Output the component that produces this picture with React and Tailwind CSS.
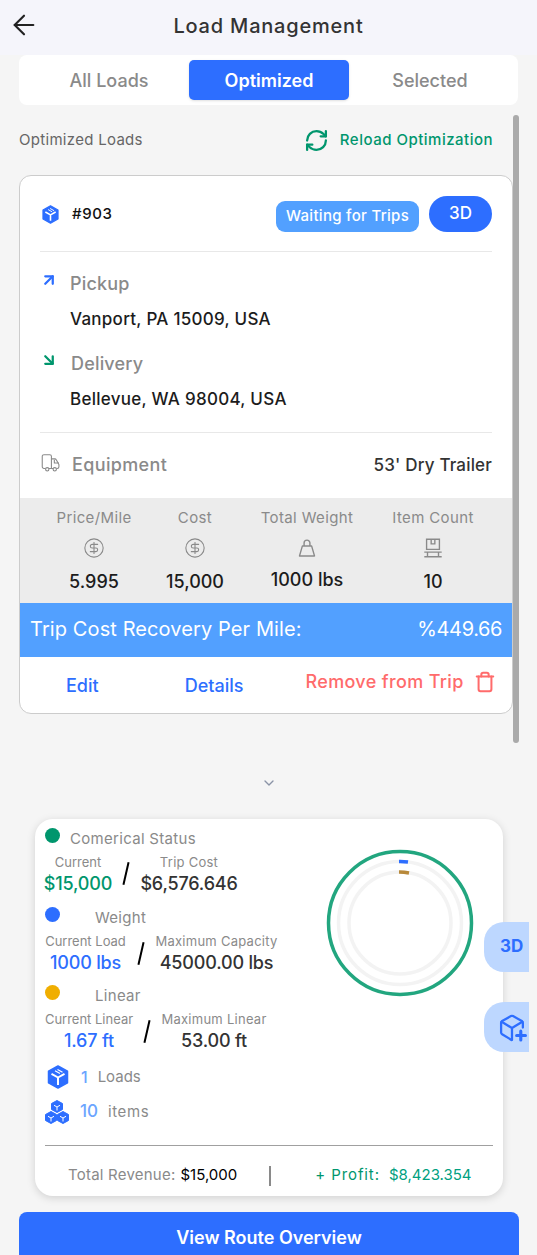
import { ArrowLeft, ArrowUpRight, ArrowDownRight, ChevronDown, CircleDollarSign, RefreshCw, Trash } from 'lucide-react';

const BLUE = '#2d6eff';

// filled hex box, used for the load number and the load count
function BoxIcon({ className }) {
  return (
    <svg viewBox="0 0 24 24" className={className}>
      <path d="M12 1 21.5 6.2V17.8L12 23 2.5 17.8V6.2Z" fill={BLUE} stroke={BLUE} strokeWidth="1.5" strokeLinejoin="round" />
      <path d="M12 12.5V20M12 12.5 5.5 8.8M12 12.5 18.5 8.8" stroke="#fff" strokeWidth="2" fill="none" />
      <path d="M9 5.8 14 8.6M11.5 4.4 16.5 7.2" stroke="#fff" strokeWidth="1.2" fill="none" />
    </svg>
  );
}

function CubesIcon({ className }) {
  const cube = (x, y) => (
    <g transform={`translate(${x} ${y})`}>
      <path d="M6 0 11.5 3V9L6 12 .5 9V3Z" fill={BLUE} stroke={BLUE} strokeWidth="1" strokeLinejoin="round" />
      <path d="M6 6.5V10M6 6.5 3 4.8M6 6.5 9 4.8" stroke="#fff" strokeWidth="1" fill="none" />
    </g>
  );
  return (
    <svg viewBox="0 0 24 24" className={className}>
      {cube(6, 0.5)}
      {cube(0, 11.5)}
      {cube(12, 11.5)}
    </svg>
  );
}

function TruckIcon({ className }) {
  return (
    <svg viewBox="0 0 24 24" fill="none" stroke="#8a8a8a" strokeWidth="1.3" strokeLinejoin="round" className={className}>
      <path d="M5.5 18.5H3.5a2 2 0 0 1-2-2V4a2 2 0 0 1 2-2h7a2 2 0 0 1 2 2v14.5H9.5" />
      <path d="M12.5 7h4.2c.7 0 1.3.4 1.6 1l2.9 5.3c.2.3.3.6.3 1v2.2a2 2 0 0 1-2 2h-1M14.5 18.5h-2" />
      <path d="M16 8v4h5.5" />
      <circle cx="7.5" cy="19.5" r="2" />
      <circle cx="16.5" cy="19.5" r="2" />
    </svg>
  );
}

function WeightIcon({ className }) {
  return (
    <svg viewBox="0 0 24 24" fill="none" stroke="#8a8a8a" strokeWidth="1.7" strokeLinejoin="round" className={className}>
      <path d="M6.5 9.5h11L21 21.5H3Z" />
      <path d="M8.5 9.5V6a3.5 3.5 0 0 1 7 0v3.5" />
    </svg>
  );
}

function PalletIcon({ className }) {
  return (
    <svg viewBox="0 0 24 24" fill="none" stroke="#8a8a8a" strokeWidth="1.5" className={className}>
      <path d="M5 2.5h14v11H5Z" />
      <path d="M10 2.5v5h4v-5" />
      <path d="M2.5 16.5h19M2.5 21.5h19M6 16.5v5M18 16.5v5" />
    </svg>
  );
}

function BoxPlusIcon({ className }) {
  return (
    <svg viewBox="0 0 28 28" fill="none" stroke={BLUE} strokeWidth="2.2" strokeLinejoin="round" strokeLinecap="round" className={className}>
      <path d="M24 14V9.5a2 2 0 0 0-1-1.7L14.5 3a2 2 0 0 0-2 0L4 7.8a2 2 0 0 0-1 1.7v9.300a2 2 0 0 0 1 1.700L13 26" />
      <path d="M3.5 8.500l10 6 10-6M13.500 14.500V26" />
      <path d="M22 17.500v8.500M18 21.700h8.500" strokeWidth="3" />
    </svg>
  );
}

function Ring() {
  // green outer ring plus two grey tracks with small progress ticks
  return (
    <svg viewBox="0 0 150 150" className="w-[150px] h-[150px]">
      <circle cx="75" cy="75" r="71.5" fill="none" stroke="#22a67f" strokeWidth="3.5" />
      <circle cx="75" cy="75" r="61.5" fill="none" stroke="#f3f3f3" strokeWidth="3.5" />
      <circle cx="75" cy="75" r="51" fill="none" stroke="#f3f3f3" strokeWidth="3.5" />
      <path d="M74 13.5A61.5 61.5 0 0 1 83 14" fill="none" stroke={BLUE} strokeWidth="3.5" />
      <path d="M74 24A51 51 0 0 1 84 25" fill="none" stroke="#b8893a" strokeWidth="3.5" />
    </svg>
  );
}

function Stat({ label, value, Icon, iconClass, valueClass = '' }) {
  return (
    <div className="flex flex-col items-center whitespace-nowrap">
      <span className="text-[15px] leading-[20px] text-[#8a8a8a] tracking-[0.025em]">{label}</span>
      <span className="mt-[9px] h-[22px] flex items-center">
        <Icon strokeWidth={1.2} className={`text-[#8a8a8a] ${iconClass}`} />
      </span>
      <span className={`mt-[12px] text-[18px] leading-[22px] font-medium text-[#1c1c1c] ${valueClass}`}>{value}</span>
    </div>
  );
}

function Metric({ dotClass, title, left, right, leftClass, rightClass, slashClass, valueClass, titleGap }) {
  return (
    <div>
      <div className="flex items-center h-[18px]">
        <span className={`w-[15px] h-[15px] rounded-full -mt-[7px] ${dotClass}`} />
        <span className={`text-[15px] leading-[18px] text-[#8a8a8a] tracking-[0.02em] ${titleGap}`}>{title}</span>
      </div>
      <div className="flex mt-[5px] whitespace-nowrap">
        <div className={`flex flex-col items-center ${leftClass}`}>
          <span className="text-[13px] leading-[18px] text-[#8a8a8a]">{left[0]}</span>
          <span className={`text-[18px] leading-[26px] font-medium tracking-[-0.01em] ${valueClass}`}>{left[1]}</span>
        </div>
        <span className={`w-[2px] h-[23px] bg-black rotate-[13deg] ${slashClass}`} />
        <div className={`flex flex-col items-center ${rightClass}`}>
          <span className="text-[13px] leading-[18px] text-[#8a8a8a] tracking-[0.02em]">{right[0]}</span>
          <span className="text-[18px] leading-[26px] font-medium text-[#333333] tracking-[-0.01em]">{right[1]}</span>
        </div>
      </div>
    </div>
  );
}

export default function App() {
  return (
    <div className="relative h-[1255px] w-[537px] overflow-hidden bg-[#f5f5f5] font-['Inter',sans-serif]">
      {/* header */}
      <header className="relative flex items-center justify-center h-[55px] bg-[#f5f5fb]">
        <ArrowLeft className="absolute left-[8px] top-[9px] w-[32px] h-[32px] text-[#222222]" strokeWidth={1.6} />
        <h1 className="text-[20px] font-medium text-[#333333] tracking-[0.04em] -mt-[4px]">Load Management</h1>
      </header>

      {/* tabs */}
      <div className="mx-[19px] h-[50px] bg-white rounded-[8px] grid grid-cols-[170px_160px_170px] py-[5px]">
        <button className="pl-[10px] text-[18px] font-medium text-[#8a8a8a]">All Loads</button>
        <button className="text-[18px] font-semibold text-white bg-[#2d6eff] rounded-[5px] shadow-sm">Optimized</button>
        <button className="pr-[8px] text-[18px] font-medium text-[#8a8a8a]">Selected</button>
      </div>

      {/* scrollable list */}
      <div className="relative">
        <div className="absolute left-[513px] top-[10px] w-[6px] h-[628px] rounded-full bg-[#aaaaaa]" />
        <div className="flex items-center justify-between pl-[19px] pr-[44px] h-[70px]">
          <span className="text-[15px] text-[#666666] tracking-[0.02em]">Optimized Loads</span>
          <span className="flex items-center gap-[11px] text-[15px] font-medium text-[#00966d] tracking-[0.033em]">
            <RefreshCw className="w-[25px] h-[25px]" strokeWidth={2.2} />
            Reload Optimization
          </span>
        </div>

        <div className="ml-[19px] w-[494px] h-[539px] bg-white border border-[#cccccc] rounded-[12px] overflow-hidden">
          <div className="mx-[20px] h-[76px] flex items-center justify-between border-b border-[#e8e8e8]">
            <div className="flex items-center gap-[12px] mt-[1px]">
              <BoxIcon className="w-[19px] h-[19px] ml-[1px]" />
              <span className="text-[15px] font-medium text-[#111111] tracking-[0.04em]">#903</span>
            </div>
            <div className="flex items-center gap-[10px]">
              <span className="flex items-center justify-center w-[143px] h-[31px] mt-[6px] rounded-[9px] bg-[#52a0ff] text-white text-[15px] font-medium tracking-[0.02em]">Waiting for Trips</span>
              <span className="flex items-center justify-center w-[63px] h-[36px] rounded-full bg-[#2d6eff] text-white text-[17px] font-medium">3D</span>
            </div>
          </div>

          <div className="mx-[20px] h-[181px] border-b border-[#e8e8e8] pt-[18px]">
            <div className="flex items-center h-[26px]">
              <ArrowUpRight className="w-[18px] h-[18px] -mt-[6px] text-[#2d6eff]" strokeWidth={3} />
              <span className="ml-[12px] text-[18px] font-medium text-[#8a8a8a] tracking-[0.01em]">Pickup</span>
            </div>
            <p className="ml-[30px] mt-[10px] text-[17px] leading-[26px] font-medium text-[#1c1c1c] tracking-[0.016em]">Vanport, PA 15009, USA</p>
            <div className="flex items-center h-[26px] mt-[18px]">
              <ArrowDownRight className="w-[18px] h-[18px] -mt-[6px] text-[#00966d]" strokeWidth={3} />
              <span className="ml-[13px] text-[18px] font-medium text-[#8a8a8a] tracking-[0.01em]">Delivery</span>
            </div>
            <p className="ml-[30px] mt-[10px] text-[17px] leading-[26px] font-medium text-[#1c1c1c] tracking-[0.016em]">Bellevue, WA 98004, USA</p>
          </div>

          <div className="mx-[20px] h-[65px] flex items-center justify-between">
            <div className="flex items-center gap-[11px] -mt-[2px]">
              <TruckIcon className="w-[20px] h-[20px] -mt-[3px] ml-[1px]" />
              <span className="text-[18px] font-medium text-[#8a8a8a] tracking-[0.02em]">Equipment</span>
            </div>
            <span className="text-[17px] font-medium text-[#333333] tracking-[0.01em]">53' Dry Trailer</span>
          </div>

          <div className="h-[105px] bg-[#ececec] grid grid-cols-[148px_54px_170px_120px] pt-[10px]">
            <Stat label="Price/Mile" value="5.995" Icon={CircleDollarSign} iconClass="w-[22px] h-[22px]" />
            <Stat label="Cost" value="15,000" Icon={CircleDollarSign} iconClass="w-[22px] h-[22px]" />
            <Stat label="Total Weight" value="1000 lbs" Icon={WeightIcon} iconClass="w-[20px] h-[20px]" valueClass="-translate-y-[2px]" />
            <div className="w-[82px]">
              <Stat label="Item Count" value="10" Icon={PalletIcon} iconClass="w-[22px] h-[22px]" />
            </div>
          </div>

          <div className="h-[54px] pb-[3px] bg-[#52a0ff] flex items-center justify-between px-[10px] text-white text-[20px]">
            <span className="tracking-[0.005em]">Trip Cost Recovery Per Mile:</span>
            <span className="tracking-[-0.02em]">%449.66</span>
          </div>

          <div className="flex items-center h-[55px] pt-[2px] text-[18px] font-medium text-[#2d6eff]">
            <span className="ml-[46px]">Edit</span>
            <span className="ml-[86px]">Details</span>
            <span className="ml-[62px] flex items-center gap-[10px] text-[#ff6b6b] -mt-[8px] tracking-[0.02em]">
              Remove from Trip
              <Trash className="w-[22px] h-[22px]" strokeWidth={2.2} />
            </span>
          </div>
        </div>
      </div>

      <div className="flex justify-center h-[105px] pt-[61px]">
        <ChevronDown className="w-[16px] h-[16px] text-[#8a93a6]" strokeWidth={2} />
      </div>

      {/* capacity summary */}
      <div className="relative">
        <div className="absolute left-[484px] top-[103px] w-[45px] h-[50px] rounded-l-[20px] bg-[#bdd7ff] flex items-center pl-[16px] text-[17px] font-bold text-[#2d6eff]">3D</div>
        <div className="absolute left-[484px] top-[183px] w-[45px] h-[50px] rounded-l-[20px] bg-[#bdd7ff] flex items-center pl-[14px]">
          <BoxPlusIcon className="w-[29px] h-[29px]" />
        </div>

        <div className="ml-[35px] w-[468px] h-[377px] bg-white rounded-[18px] shadow-[0_2px_8px_rgba(0,0,0,0.15)] px-[10px] pt-[11px]">
          <div className="flex">
            <div className="w-[280px] flex flex-col gap-[11.5px] h-[235px]">
              <Metric dotClass="bg-[#00966d]" title="Comerical Status" titleGap="ml-[10px]" valueClass="text-[#00966d]"
                left={['Current', '$15,000']} right={['Trip Cost', '$6,576.646']}
                leftClass="w-[66px]" slashClass="ml-[14px] mt-[9px]" rightClass="w-[96px] ml-[14px]" />
              <Metric dotClass="bg-[#2d6eff]" title="Weight" titleGap="ml-[35px]" valueClass="text-[#2d6eff]"
                left={['Current Load', '1000 lbs']} right={['Maximum Capacity', '45000.00 lbs']}
                leftClass="w-[81px]" slashClass="ml-[14px] mt-[10px]" rightClass="w-[123px] ml-[13px]" />
              <Metric dotClass="bg-[#f0ae00]" title="Linear" titleGap="ml-[35px]" valueClass="text-[#2d6eff]"
                left={['Current Linear', '1.67 ft']} right={['Maximum Linear', '53.00 ft']}
                leftClass="w-[88px]" slashClass="ml-[13px] mt-[10px]" rightClass="w-[102px] ml-[15px]" />
            </div>
            <div className="mt-[18px]">
              <Ring />
            </div>
          </div>

          <div className="flex items-center h-[26px] mt-[-1px]">
            <BoxIcon className="w-[24px] h-[24px] ml-[1px]" />
            <span className="ml-[11px] text-[16px] font-medium text-[#6ba5ff]">1</span>
            <span className="ml-[10px] text-[15px] text-[#8a8a8a]">Loads</span>
          </div>
          <div className="flex items-center h-[26px] mt-[9px]">
            <CubesIcon className="w-[24px] h-[24px]" />
            <span className="ml-[11px] text-[17px] font-medium text-[#6ba5ff]">10</span>
            <span className="ml-[10px] text-[15px] text-[#8a8a8a] tracking-[0.04em]">items</span>
          </div>

          <div className="mt-[20px] border-t border-[#a0a0a0] flex items-center h-[51px] pt-[9px] text-[15px] whitespace-nowrap">
            <span className="ml-[23px] text-[#8a8a8a] tracking-[0.015em]">Total Revenue:</span>
            <span className="ml-[5px] text-black">$15,000</span>
            <span className="ml-[32px] w-[2px] h-[20px] bg-[#8a8a8a]" />
            <span className="ml-[44px] text-[#00966d] tracking-[0.06em]">+ Profit:</span>
            <span className="ml-[9px] text-[#00a080]">$8,423.354</span>
          </div>
        </div>
      </div>

      <button className="block mx-[19px] mt-[16px] w-[500px] h-[50px] rounded-t-[8px] bg-[#2d6eff] text-white text-[18px] font-semibold">
        View Route Overview
      </button>
    </div>
  );
}
